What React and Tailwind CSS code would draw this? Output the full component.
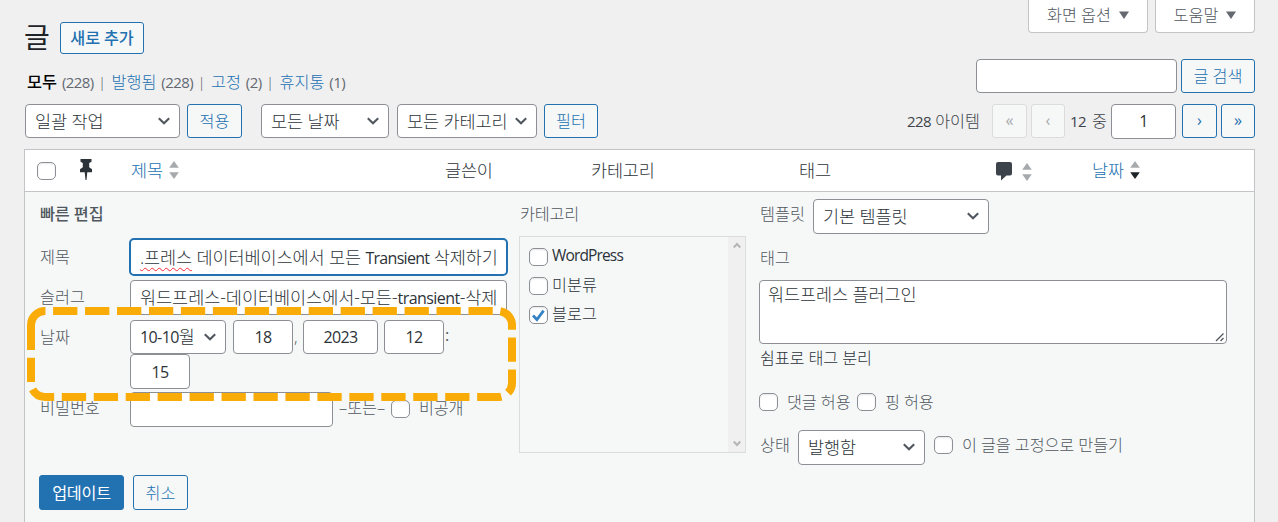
import React from 'react';
import clsx from 'clsx';

const views = [
  { label: '모두', count: 228, current: true },
  { label: '발행됨', count: 228 },
  { label: '고정', count: 2 },
  { label: '휴지통', count: 1 }
];

const categories = [
  { name: 'WordPress', height: 'h-[29px]', text: 'font-normal text-[15.5px] tracking-[-0.85px]' },
  { name: '미분류', height: 'h-[30px]' },
  { name: '블로그', height: 'h-[28px]', checked: true }
];

const Chevron = () => (
  <svg width="12" height="8" viewBox="0 0 12 8" fill="none" stroke="#50575e" strokeWidth="2.1" className="shrink-0">
    <path d="M0.8 1.2 6 6.3l5.2-5.1" />
  </svg>
);

// Latin letters and digits run wider than the Korean text around them
const Latin = ({ children }) => (
  <span className="text-[16px] font-normal tracking-[-0.6px]">{children}</span>
);

const Select = ({ children, className }) => (
  <div
    className={clsx(
      'flex shrink-0 items-center justify-between rounded-[4px] border border-[#8c8f94] bg-white pb-px pl-[9px] pr-[9px] text-[17.5px] text-[#2c3338]',
      className
    )}
  >
    <span className="tracking-[-0.1px]">{children}</span>
    <Chevron />
  </div>
);

const Field = ({ children, className }) => (
  <div
    className={clsx(
      'flex shrink-0 items-center overflow-hidden rounded-[4px] border border-[#8c8f94] bg-white text-[17.5px] text-[#2c3338]',
      className
    )}
  >
    {children}
  </div>
);

const Button = ({ children, primary, className }) => (
  <button
    className={clsx(
      'flex shrink-0 items-center justify-center rounded-[3px] border border-[#2271b1] text-[16.25px]',
      primary ? 'bg-[#2271b1] text-white' : 'bg-[#f6f7f7] text-[#2271b1]',
      className
    )}
  >
    {children}
  </button>
);

const PageButton = ({ children, disabled, className }) => (
  <button
    className={clsx(
      'flex h-[34px] shrink-0 items-center justify-center rounded-[3px] border bg-[#f6f7f7] pb-[2px] text-[16.25px] font-normal',
      disabled ? 'border-[#dcdcde] text-[#a7aaad]' : 'border-[#2271b1] text-[#2271b1]',
      className
    )}
  >
    {children}
  </button>
);

const Checkbox = ({ checked, className }) => (
  <span
    className={clsx(
      'flex h-[18px] w-[19px] shrink-0 items-center justify-center rounded-[5px] border border-[#8c8f94] bg-white shadow-[inset_0_1px_2px_rgba(0,0,0,0.1)]',
      className
    )}
  >
    {checked && (
      <svg width="15" height="15" viewBox="0 0 15 15" fill="none" stroke="#3582c4" strokeWidth="2.8" className="shrink-0">
        <path d="M2 7.6 5.9 11.6 12.6 2.6" />
      </svg>
    )}
  </span>
);

const SortArrows = ({ active, className }) => (
  <svg width="10" height="18" viewBox="0 0 10 18" className={clsx('shrink-0', className)}>
    <path d="M5 0 9.8 6.8H.2z" fill="#a7aaad" />
    <path d="M5 18 .2 11.2h9.6z" fill={active ? '#1d2327' : '#a7aaad'} />
  </svg>
);

const ScreenTab = ({ children, className }) => (
  <button
    className={clsx(
      'flex h-[33px] items-center justify-center gap-[8px] rounded-b-[4px] border border-t-0 border-[#c3c4c7] bg-white pb-[3px] text-[16.25px] text-[#50575e]',
      className
    )}
  >
    <span>{children}</span>
    <svg width="10" height="8" viewBox="0 0 10 8" fill="#646970">
      <path d="M0 .5h10L5 8z" />
    </svg>
  </button>
);

const PageHeader = () => (
  <div className="flex h-[149px] shrink-0 justify-between pl-[25px] pr-[23px]">
    <div>
      <div className="flex h-[54px] items-end">
        <h1 className="w-[35px] text-[28px] font-normal leading-[34px] text-[#1d2327]">
          <span className="-ml-px">글</span>
        </h1>
        <Button className="h-[32px] w-[84px] font-medium tracking-[-0.15px]">새로 추가</Button>
      </div>
      <ul className="mt-[14px] flex h-[28px] items-center pl-[2px] text-[16.25px] text-[#646970]">
        {views.map((view, i) => (
          <li key={view.label} className="flex">
            <span className={view.current ? 'font-medium text-black' : 'text-[#2271b1]'}>{view.label}</span>
            <span className="ml-[5px] text-[15px] font-normal tracking-[-0.6px]">({view.count})</span>
            {i < views.length - 1 && (
              <span className="ml-[6px] mr-[7px] flex w-[5px] justify-center text-[15px] text-[#50575e]">|</span>
            )}
          </li>
        ))}
      </ul>
      <div className="mt-[8px] flex h-[34px]">
        <Select className="w-[155px]">일괄 작업</Select>
        <Button className="ml-[7px] w-[55px]">적용</Button>
        <Select className="ml-[19px] w-[128px]">모든 날짜</Select>
        <Select className="ml-[8px] w-[140px]">모든 카테고리</Select>
        <Button className="ml-[7px] w-[54px]">필터</Button>
      </div>
    </div>

    <div className="flex flex-col items-end">
      <div className="flex gap-[7px]">
        <ScreenTab className="w-[120px]">화면 옵션</ScreenTab>
        <ScreenTab className="w-[100px]">도움말</ScreenTab>
      </div>
      <div className="mt-[26px] flex h-[34px] gap-[4px]">
        <Field className="w-[201px]" />
        <Button className="w-[74px]">글 검색</Button>
      </div>
      <div className="mt-[11px] flex h-[35px] text-[16.25px] text-[#3c434a]">
        <span className="w-[85px] leading-[34px]">
          <span className="text-[15px] font-normal tracking-[-0.6px]">228</span> 아이템
        </span>
        <PageButton disabled className="w-[35px]">«</PageButton>
        <PageButton disabled className="ml-[4px] w-[34px]">‹</PageButton>
        <span className="ml-[5px] w-[41px] leading-[34px]">
          <span className="mr-[2px] text-[15px] font-normal tracking-[-0.7px]">12</span> 중
        </span>
        <Field className="w-[65px] justify-center pb-px">
          <Latin>1</Latin>
        </Field>
        <PageButton className="ml-[6px] w-[35px]">›</PageButton>
        <PageButton className="ml-[4px] w-[34px]">»</PageButton>
      </div>
    </div>
  </div>
);

const TableHead = () => (
  <div className="flex h-[42px] shrink-0 items-center border-b border-[#c3c4c7] bg-white pb-px text-[17.5px] text-[#2c3338]">
    <Checkbox className="ml-[12px] mr-[-1px] mt-px w-[18px]" />
    <svg width="12" height="21" viewBox="0 0 12 21" fill="#2c3338" className="mb-[2px] ml-[25px] shrink-0">
      <path d="M.5 0h11v2.800L9.200 4v4.200L12 10.300v2.900H7.300L6.500 21h-1l-.8-7.800H0v-2.900l2.800-2.100V4L.5 2.800z" />
    </svg>
    <div className="ml-[39px] flex w-[314px] items-center text-[#2271b1]">
      <span className="w-[38px] tracking-[-0.2px]">제목</span>
      <SortArrows />
    </div>
    <span className="w-[146px] tracking-[-0.2px]">글쓴이</span>
    <span className="w-[208px] tracking-[-0.2px]">카테고리</span>
    <span className="w-[197px] tracking-[-0.2px]">태그</span>
    <svg width="16" height="19" viewBox="0 0 16 19" fill="#3c434a" className="mt-[2px] shrink-0">
      <path d="M2 0h12a2 2 0 0 1 2 2v9.500a2 2 0 0 1-2 2h-3.500L5 18.500v-5H2a2 2 0 0 1-2-2V2a2 2 0 0 1 2-2z" />
    </svg>
    <SortArrows className="ml-[10px] mt-[4px]" />
    <span className="ml-[60px] w-[38px] tracking-[-0.2px] text-[#2271b1]">날짜</span>
    <SortArrows active />
  </div>
);

const DateFields = () => (
  <div className="w-[377px]">
    <div className="flex h-[34px]">
      <Select className="w-[96px]">
        <Latin>10-10</Latin>월
      </Select>
      <Field className="ml-[7px] w-[60px] justify-center">
        <Latin>18</Latin>
      </Field>
      <span className="w-[10px] pl-px leading-[34px]">,</span>
      <Field className="w-[75px] justify-center">
        <Latin>2023</Latin>
      </Field>
      <Field className="ml-[6px] w-[60px] justify-center">
        <Latin>12</Latin>
      </Field>
      <span className="ml-[1px] font-normal leading-[31px]">:</span>
    </div>
    <Field className="h-[35px] w-[60px] justify-center">
      <Latin>15</Latin>
    </Field>
  </div>
);

// Dashed marker around the date row
const DateHighlight = () => (
  <svg
    width="490"
    height="96"
    viewBox="26 306 490 96"
    fill="none"
    className="pointer-events-none absolute left-[1px] top-[114px]"
  >
    <path
      d="M31 327V325A14 14 0 0 1 45 311H498A14 14 0 0 1 512 325V383A14 14 0 0 1 498 397H45A14 14 0 0 1 31 383V327"
      stroke="#f9ac08"
      strokeWidth="8"
      strokeDasharray="24.3 7.65"
    />
  </svg>
);

const EditFields = () => (
  <div className="w-[480px] shrink-0 pl-px">
    <div className="h-[46px] pt-[8px] font-medium leading-[28px] tracking-[-0.1px]">빠른 편집</div>
    <div className="flex h-[39px]">
      <span className="w-[89px] leading-[38px]">제목</span>
      <div className="flex h-[38px] w-[379px] items-center overflow-hidden rounded-[5px] border-2 border-[#2271b1] bg-white pl-[9px] text-[17.5px] text-[#2c3338]">
        <span className="whitespace-nowrap tracking-[-0.1px]">
          <span className="underline decoration-red-500 decoration-wavy decoration-1 underline-offset-[3px]">.프레스</span>
          {' 데이터베이스에서 모든 '}
          <span className="text-[16px] font-normal tracking-[-0.7px]">Transient</span>
          {' 삭제하기'}
        </span>
      </div>
    </div>
    <div className="mt-[3px] flex h-[35px]">
      <span className="w-[90px] leading-[35px]">슬러그</span>
      <Field className="w-[377px] pl-[9px]">
        <span className="whitespace-nowrap tracking-[-0.05px]">
          워드프레스-데이터베이스에서-모든-<span className="text-[16px] font-normal tracking-[-0.55px]">transient</span>-삭제
        </span>
      </Field>
    </div>
    <div className="mt-[5px] flex h-[69px]">
      <span className="w-[90px] leading-[34px]">날짜</span>
      <DateFields />
    </div>
    <div className="mt-[3px] flex h-[35px]">
      <span className="w-[90px] leading-[33px]">비밀번호</span>
      <Field className="w-[203px]" />
      <span className="ml-[6px] w-[52px] leading-[33px]">–또는–</span>
      <Checkbox className="mt-[8px]" />
      <span className="ml-[9px] leading-[33px] tracking-[-0.2px]">비공개</span>
    </div>
  </div>
);

const CategoryList = () => (
  <div className="w-[240px] shrink-0">
    <div className="h-[44px] pl-px pt-[8px] leading-[28px] tracking-[-0.2px]">카테고리</div>
    <div className="flex h-[217px] w-[227px] border border-[#dcdcde]">
      <ul className="flex-1 pl-[9px] pt-[4px] text-[#2c3338]">
        {categories.map((category) => (
          <li key={category.name} className={clsx('flex items-center', category.height)}>
            <Checkbox checked={category.checked} className="mt-[2px]" />
            <span className={clsx('ml-[4px] pb-px', category.text)}>{category.name}</span>
          </li>
        ))}
      </ul>
      <div className="flex w-[17px] flex-col items-center justify-between bg-[#f0f0f0] py-[5px]">
        <svg width="8" height="7" viewBox="0 0 8 7" fill="none" stroke="#b5b5b5" strokeWidth="2">
          <path d="M.7 5.500 4 2l3.300 3.500" />
        </svg>
        <svg width="8" height="7" viewBox="0 0 8 7" fill="none" stroke="#b5b5b5" strokeWidth="2">
          <path d="M.7 1.500 4 5l3.300-3.500" />
        </svg>
      </div>
    </div>
  </div>
);

const PostOptions = () => (
  <div className="w-[468px] shrink-0">
    <div className="flex h-[50px] pt-[7px]">
      <span className="w-[54px] pl-px leading-[31px]">템플릿</span>
      <Select className="h-[35px] w-[176px]">기본 템플릿</Select>
    </div>
    <div className="h-[38px] pl-px leading-[32px]">태그</div>
    <div className="flex h-[64px] items-end justify-between rounded-[4px] border border-[#8c8f94] bg-white pl-[8px] text-[17.5px] text-[#2c3338]">
      <span className="self-start leading-[26px] tracking-[-0.1px]">워드프레스 플러그인</span>
      <svg width="11" height="11" viewBox="0 0 11 11" stroke="#50575e" strokeWidth="1.300">
        <path d="M1 9 8.500 1.500M5.500 9 8.500 6" />
      </svg>
    </div>
    <p className="pl-px leading-[28px] tracking-[-0.15px] text-[#2c3338]">쉼표로 태그 분리</p>
    <div className="mt-[16px] flex h-[28px] items-center">
      <Checkbox />
      <span className="ml-[9px] w-[70px] tracking-[-0.1px]">댓글 허용</span>
      <Checkbox />
      <span className="ml-[9px] tracking-[-0.1px]">핑 허용</span>
    </div>
    <div className="mt-[14px] flex h-[35px]">
      <span className="w-[39px] pl-px leading-[30px]">상태</span>
      <Select className="w-[127px]">발행함</Select>
      <Checkbox className="ml-[9px] mt-[6px] w-[18px]" />
      <span className="ml-[9px] leading-[30px] tracking-[-0.1px]">이 글을 고정으로 만들기</span>
    </div>
  </div>
);

const QuickEdit = () => (
  <div className="relative flex-1 pl-[14px] text-[16.25px] text-[#50575e]">
    <div className="flex h-[283px]">
      <EditFields />
      <CategoryList />
      <PostOptions />
    </div>
    <div className="flex h-[35px] gap-[9px]">
      <Button primary className="w-[85px] font-normal tracking-[-0.3px]">업데이트</Button>
      <Button className="w-[55px]">취소</Button>
    </div>
    <DateHighlight />
  </div>
);

const App = () => {
  return (
    <div className="flex h-[522px] w-[1278px] flex-col overflow-hidden whitespace-nowrap bg-[#f0f0f0] font-['Open_Sans','Noto_Sans_CJK_KR',sans-serif] font-light leading-[24px]">
      <PageHeader />
      <div className="ml-[24px] flex w-[1231px] flex-1 flex-col border-x border-t border-[#c3c4c7] bg-[#f6f8f8]">
        <TableHead />
        <QuickEdit />
      </div>
    </div>
  );
};

export default App;
